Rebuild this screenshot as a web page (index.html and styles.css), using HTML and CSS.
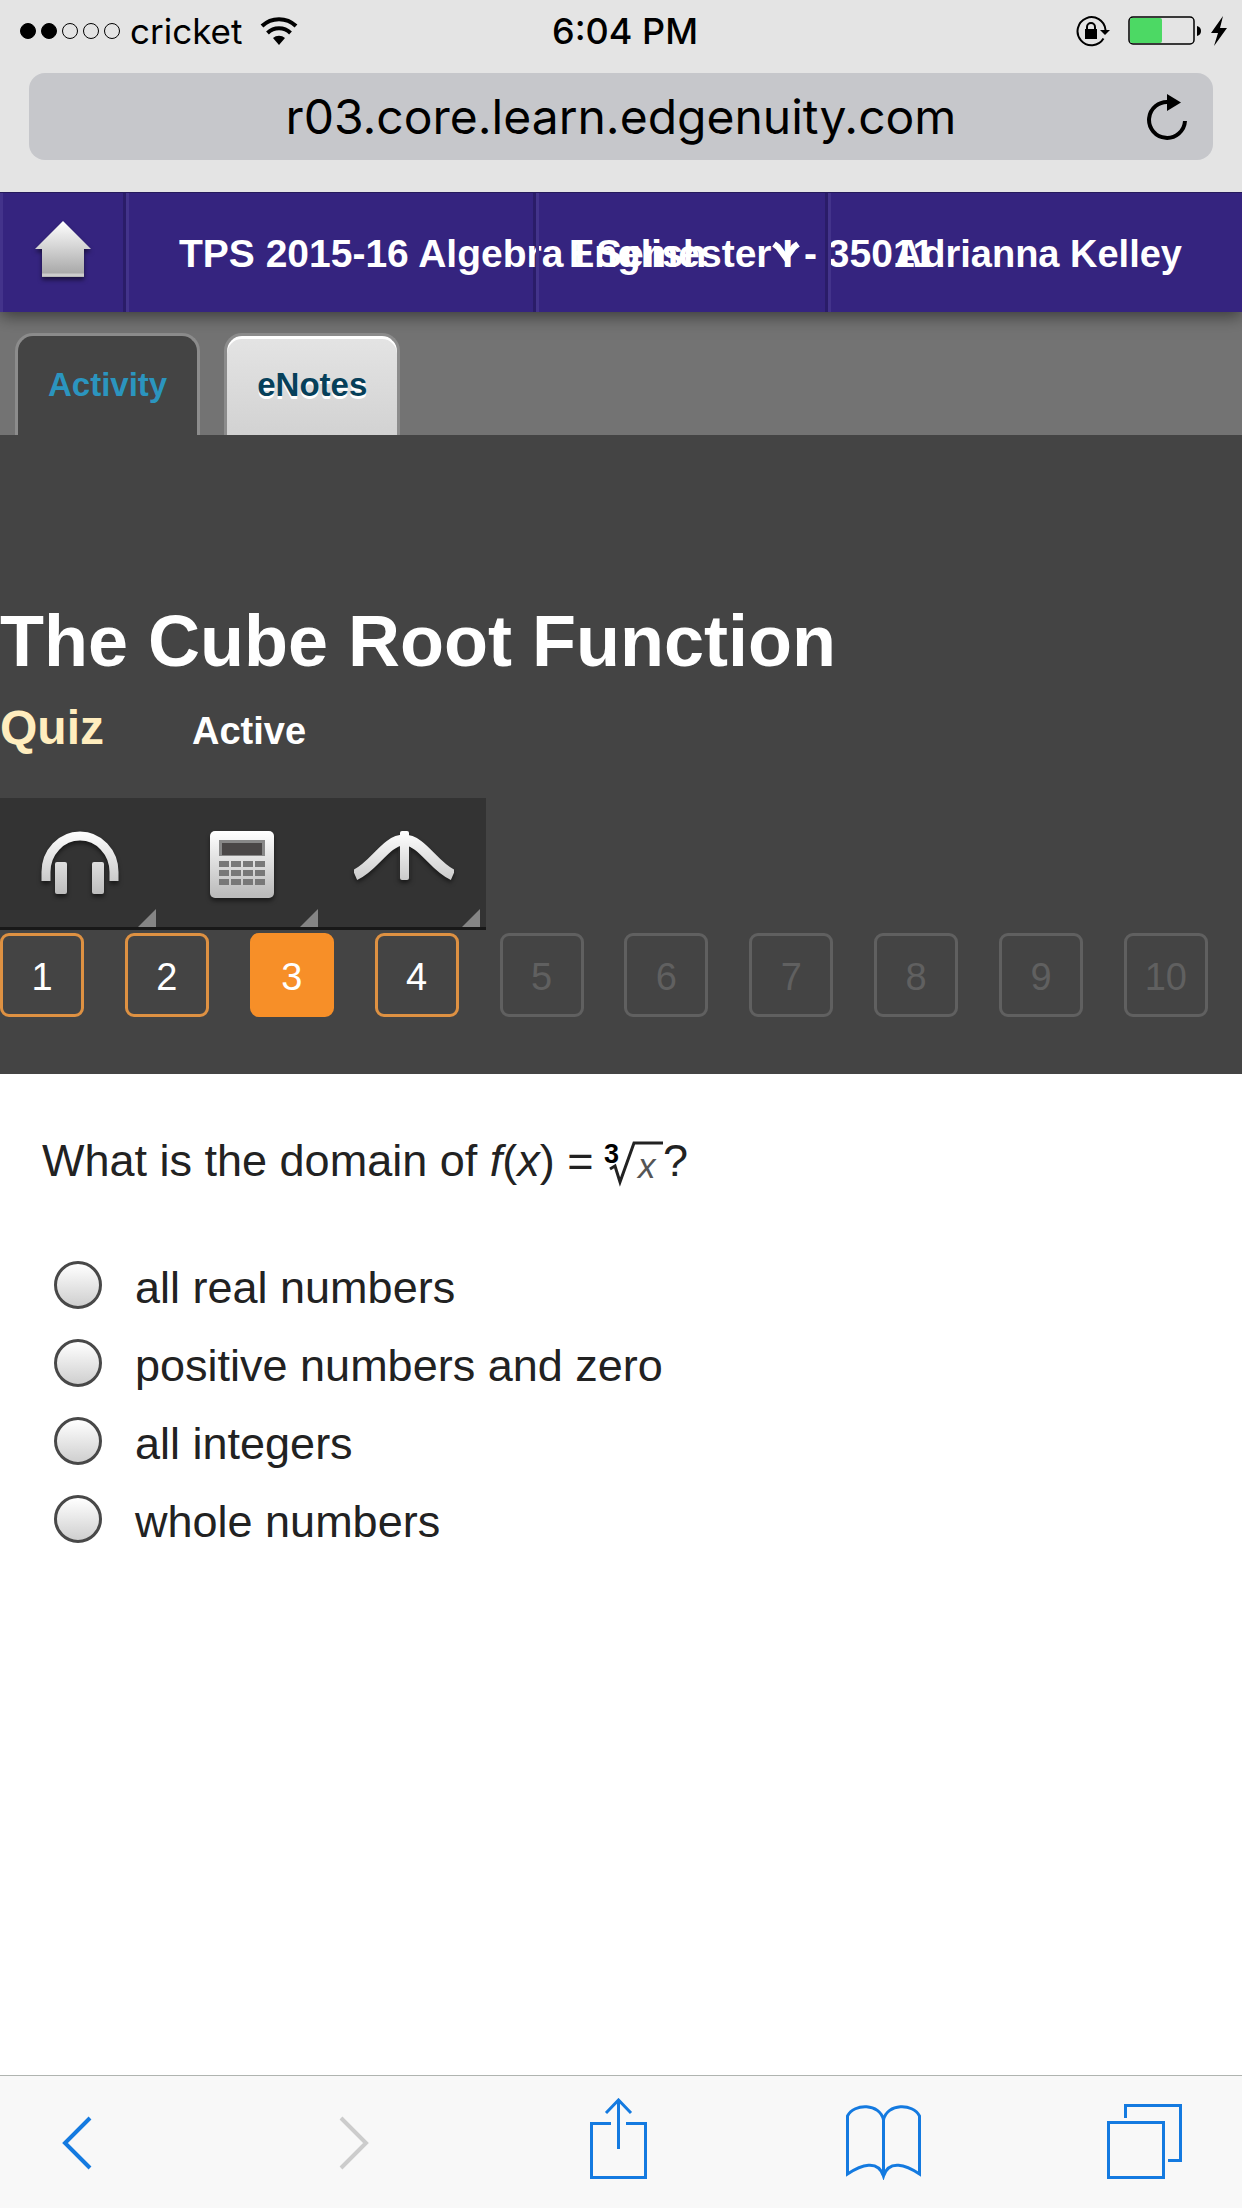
FILE: index.html
```html
<!DOCTYPE html>
<html lang="en">
  <head>
    <meta charset="UTF-8" />
    <meta name="viewport" content="width=device-width, initial-scale=1.0" />
    <title>The Cube Root Function</title>
    <link rel="stylesheet" href="styles.css">
  </head>
  <body>
    <header class="browser">
      <div class="status">
        <div class="carrier">
          <div class="signal">
            <span class="dot full"></span>
            <span class="dot full"></span>
            <span class="dot"></span>
            <span class="dot"></span>
            <span class="dot"></span>
          </div>
          <span>cricket</span>
          <svg class="wifi" width="38" height="28" viewBox="0 0 38 28">
            <path d="M2 9a24.500 24.500 0 0 1 34 0" fill="none" stroke="#000" stroke-width="4" />
            <path d="M7.500 16a16.500 16.500 0 0 1 23 0" fill="none" stroke="#000" stroke-width="4" />
            <path d="M19 28l-6-7a9 9 0 0 1 12 0z" />
          </svg>
        </div>
        <span class="clock">6:04 PM</span>
        <div class="power">
          <svg width="34" height="32" viewBox="0 0 34 32">
            <path d="M27.500 23.500A14 14 0 1 1 29.500 15" fill="none" stroke="#000" stroke-width="2" />
            <path d="M24 15h10l-5 5z" />
            <rect x="9" y="14" width="12" height="10" />
            <path d="M11 15v-3a4 4 0 0 1 8 0v3" fill="none" stroke="#000" stroke-width="2" />
          </svg>
          <svg class="battery" width="73" height="30" viewBox="0 0 73 30">
            <rect x="1" y="1" width="65" height="27" rx="4" fill="none" stroke="#000" stroke-width="1.500" />
            <rect x="2" y="2" width="32" height="25" rx="2" fill="#4cd964" />
            <path d="M69 10q4 1 4 5t-4 5z" />
          </svg>
          <svg class="bolt" width="16" height="30" viewBox="0 0 16 30">
            <path d="M12 0L0 17h7L3 30 16 12H9z" />
          </svg>
        </div>
      </div>
      <div class="addressbar">
        <input class="address" type="text" value="r03.core.learn.edgenuity.com" aria-label="Address" />
        <button class="reload" aria-label="Reload">
          <svg width="40" height="46" viewBox="0 0 40 46">
            <path d="M38 27A18 18 0 1 1 22 8" fill="none" stroke="#000" stroke-width="4" />
            <path d="M20 0l14 8.500L20 17z" />
          </svg>
        </button>
      </div>
    </header>

    <nav class="nav">
      <a href="#" class="item home" aria-label="Home">
        <svg width="56" height="60" viewBox="0 0 56 60">
          <defs>
            <linearGradient id="silver" x1="0" y1="0" x2="0" y2="1">
              <stop offset="0" stop-color="#fff" />
              <stop offset="1" stop-color="#a3a3a3" />
            </linearGradient>
          </defs>
          <path d="M28 0L56 28h-7v28H7V28H0z" fill="url(#silver)" />
          <path d="M7 54h42" stroke="#ccc" stroke-width="3" />
        </svg>
      </a>
      <a href="#" class="item course">TPS 2015-16 Algebra I Semester I - 35011</a>
      <a href="#" class="item language">
        English
        <svg class="chevron" width="30" height="22" viewBox="0 0 30 22">
          <path d="M3 3l4 3 8 11 8-11 4-3" fill="none" stroke="#fff" stroke-width="6" />
        </svg>
      </a>
      <a href="#" class="item user">Adrianna Kelley</a>
    </nav>

    <div class="tabs">
      <button class="tab active">Activity</button>
      <button class="tab">eNotes</button>
    </div>

    <section class="lesson">
      <h1>The Cube Root Function</h1>
      <div class="state">
        <h2>Quiz</h2>
        <h3>Active</h3>
      </div>
      <div class="tools">
        <button class="tool" aria-label="Audio">
          <svg width="78" height="66" viewBox="0 0 78 66">
            <defs>
              <linearGradient id="metal" gradientUnits="userSpaceOnUse" x1="0" y1="0" x2="0" y2="64">
                <stop offset="0" stop-color="#fff" />
                <stop offset="1" stop-color="#bbb" />
              </linearGradient>
            </defs>
            <path d="M5 50V41a34 36 0 0 1 68 0v9" fill="none" stroke="url(#metal)" stroke-width="9" />
            <rect x="14" y="31" width="12" height="32" rx="2" fill="url(#metal)" />
            <rect x="51" y="31" width="12" height="32" rx="2" fill="url(#metal)" />
          </svg>
        </button>
        <button class="tool" aria-label="Calculator">
          <svg width="64" height="67" viewBox="0 0 64 67">
            <rect width="64" height="67" rx="5" fill="url(#metal)" />
            <rect x="9" y="9" width="46" height="16" fill="#888" />
            <rect x="12" y="12" width="40" height="12" fill="#4a4747" />
            <path d="M9 33h46M9 42h46M9 51h46" stroke="#787878" stroke-width="6" stroke-dasharray="10 2" />
          </svg>
        </button>
        <button class="tool" aria-label="Graphing">
          <svg width="100" height="66" viewBox="0 0 100 66">
            <path d="M1 44C20 36 32 9 50 9s30 27 49 35" fill="none" stroke="url(#metal)" stroke-width="11" />
            <rect x="46" y="0" width="9" height="49" rx="2" fill="url(#metal)" />
            <path d="M45 16v32M56 16v32" stroke="#333" />
          </svg>
        </button>
      </div>
      <div class="questions">
        <button class="number done">1</button>
        <button class="number done">2</button>
        <button class="number done current">3</button>
        <button class="number done">4</button>
        <button class="number" disabled>5</button>
        <button class="number" disabled>6</button>
        <button class="number" disabled>7</button>
        <button class="number" disabled>8</button>
        <button class="number" disabled>9</button>
        <button class="number" disabled>10</button>
      </div>
    </section>

    <main class="quiz">
      <p class="question">
        What is the domain of <i>f</i>(<i>x</i>) =
        <svg class="root" width="60" height="50" viewBox="0 0 60 50">
          <text x="1" y="24" font-size="27" font-weight="bold">3</text>
          <path d="M7 30l5-3 5 16L31 4h29" fill="none" stroke="#222" stroke-width="3" />
          <text x="35" y="39" font-size="35" font-style="italic" fill="#555">x</text>
        </svg>?
      </p>
      <form class="answers">
        <label><input type="radio" name="answer" /> all real numbers</label>
        <label><input type="radio" name="answer" /> positive numbers and zero</label>
        <label><input type="radio" name="answer" /> all integers</label>
        <label><input type="radio" name="answer" /> whole numbers</label>
      </form>
    </main>

    <footer class="toolbar">
      <button class="arrow" aria-label="Back">
        <svg width="30" height="82" viewBox="0 0 30 82">
          <path d="M28 20L3 45l25 25" />
        </svg>
      </button>
      <button class="arrow off" aria-label="Forward" disabled>
        <svg width="30" height="82" viewBox="0 0 30 82">
          <path d="M2 20l25 25L2 70" />
        </svg>
      </button>
      <button aria-label="Share">
        <svg width="57" height="82" viewBox="0 0 57 82">
          <path d="M21 25.500H1.500v54h54v-54H36M28.500 51V3M16 15L28.500 2 41 15" />
        </svg>
      </button>
      <button aria-label="Bookmarks">
        <svg width="75" height="82" viewBox="0 0 75 82">
          <path d="M37.500 78V22C34 5 8 5 1.500 18v58C15 67 32 61 37.500 78C43 61 60 67 73.500 76V18C67 5 41 5 37.500 22" />
        </svg>
      </button>
      <button aria-label="Pages">
        <svg width="75" height="82" viewBox="0 0 75 82">
          <path d="M1.500 24.500h55v55h-55zM18.500 20V7.500h55v55H61" />
        </svg>
      </button>
    </footer>
  </body>
</html>
```

FILE: styles.css
```css
* {
  box-sizing: border-box;
}
body {
  margin: 0;
  min-height: 100vh;
  display: flex;
  flex-direction: column;
  background-color: white;
  color: #222;
  font-family: "Liberation Sans", Arial, sans-serif;
}
button,
input {
  margin: 0;
  padding: 0;
  border: none;
  background: none;
  font-family: inherit;
}
svg {
  display: block;
}
h1,
h2,
h3,
p {
  margin: 0;
}

/* browser top */
.browser {
  position: relative;
  z-index: 1;
  height: 192px;
  background-color: #e4e4e4;
  color: black;
  font-family: Inter, sans-serif;
}
.status {
  display: grid;
  grid-template-columns: 1fr auto 1fr;
  align-items: center;
  height: 61px;
  padding: 0 12px 0 20px;
  font-size: 35px;
}
.carrier,
.power,
.signal {
  display: flex;
  align-items: center;
}
.signal {
  gap: 5px;
  margin-right: 10px;
}
.dot {
  width: 16px;
  height: 16px;
  border: 1px solid black;
  border-radius: 50%;
}
.full {
  background-color: black;
}
.wifi {
  margin-left: 18px;
}
.clock {
  font-size: 36px;
  font-weight: 500;
}
.power {
  justify-content: flex-end;
  padding-right: 3px;
}
.battery {
  margin: 0 10px 0 18px;
}
.addressbar {
  display: flex;
  align-items: center;
  height: 87px;
  margin: 12px 29px 0;
  padding: 0 26px 0 66px;
  background-color: #c6c7cb;
  border-radius: 16px;
}
.address {
  flex: 1;
  min-width: 0;
  text-align: center;
  font-size: 48px;
  color: black;
}

/* course bar */
.nav {
  display: grid;
  grid-template-columns: 126px 410fr 292fr 414fr;
  position: relative;
  height: 120px;
  background-color: #35247f;
  border-top: 1px solid #251a5c;
  box-shadow: 0 4px 16px rgba(0, 0, 0, 0.5);
}
.item {
  min-width: 0;
  display: flex;
  align-items: center;
  padding-top: 2px;
  border-left: 3px solid #43338b;
  border-right: 3px solid #2a1c68;
  color: white;
  font-size: 38px;
  font-weight: bold;
  line-height: 44px;
  text-decoration: none;
  white-space: nowrap;
}
.home {
  justify-content: center;
  padding-bottom: 6px;
}
.course {
  padding-left: 50px;
  font-size: 39px;
}
.language {
  justify-content: space-between;
  padding-left: 30px;
  padding-right: 24px;
}
.user {
  justify-content: flex-end;
  padding-right: 60px;
  border-right: none;
}
.chevron {
  margin-bottom: 4px;
}

/* tabs */
.tabs {
  display: flex;
  align-items: flex-end;
  gap: 24px;
  height: 123px;
  padding-left: 15px;
  background-color: #737373;
}
.tab {
  height: 102px;
  padding: 0 30px 2px;
  border: 3px solid #8c8c8c;
  border-bottom: none;
  border-radius: 18px 18px 0 0;
  background: linear-gradient(#e4e4e4, #d2d2d2);
  box-shadow: inset 0 3px 0 white;
  color: #06405a;
  font-size: 33px;
  font-weight: bold;
  text-shadow: 0 3px 0 white;
}
.active {
  background: #444;
  box-shadow: none;
  color: #2b95bf;
  text-shadow: none;
}

/* lesson header */
.lesson {
  padding: 164px 0 57px;
  background-color: #444;
  color: white;
}
h1 {
  font-size: 72px;
  line-height: 84px;
}
.state {
  display: flex;
  align-items: baseline;
  gap: 88px;
  margin-top: 15px;
  line-height: 60px;
}
h2 {
  font-size: 48px;
  color: #ffedbe;
}
h3 {
  font-size: 38px;
}
.tools {
  display: flex;
  width: 486px;
  height: 132px;
  margin-top: 37px;
  background-color: #333;
  border-bottom: 3px solid #181818;
}
.tool {
  position: relative;
  flex: 1;
  display: flex;
  align-items: center;
  justify-content: center;
  padding: 3px 3px 0 0;
}
.tool svg,
.home svg {
  filter: drop-shadow(0 3px 2px rgba(0, 0, 0, 0.5));
}
.tool::after {
  content: "";
  position: absolute;
  right: 6px;
  bottom: 0;
  border-left: 18px solid transparent;
  border-bottom: 18px solid #858585;
}
.questions {
  display: flex;
  justify-content: space-between;
  margin-top: 3px;
  padding-right: 34px;
}
.number {
  width: 84px;
  height: 84px;
  padding-top: 4px;
  border: 3px solid #606060;
  border-radius: 9px;
  color: #606060;
  font-size: 38px;
}
.done {
  border-color: #de9142;
  color: white;
}
.current {
  border-color: #f78f28;
  background-color: #f78f28;
}

/* quiz */
.quiz {
  flex: 1;
  padding: 60px 42px;
  font-size: 45px;
}
.question {
  line-height: 54px;
}
.root {
  display: inline-block;
  margin-left: -3px;
  vertical-align: -13px;
}
.answers {
  display: flex;
  flex-direction: column;
  gap: 24px;
  margin-top: 72px;
}
label {
  display: flex;
  align-items: center;
  gap: 33px;
  line-height: 54px;
}
input[type="radio"] {
  appearance: none;
  width: 48px;
  height: 48px;
  margin: 0 0 6px 12px;
  border: 3px solid #484848;
  border-radius: 50%;
  background: linear-gradient(white, #cfcfcf);
}

/* browser bottom */
.toolbar {
  display: grid;
  grid-template-columns: 277fr 251fr 256fr 261fr auto;
  align-items: center;
  justify-items: start;
  height: 133px;
  padding: 0 60px 6px 62px;
  border-top: 1px solid #b0b4b0;
  background-color: #f8f8f8;
}
.toolbar path {
  fill: none;
  stroke: #147ae0;
  stroke-width: 3px;
}
.toolbar .arrow path {
  stroke-width: 4px;
}
.toolbar .off path {
  stroke: #ccc;
}
```
